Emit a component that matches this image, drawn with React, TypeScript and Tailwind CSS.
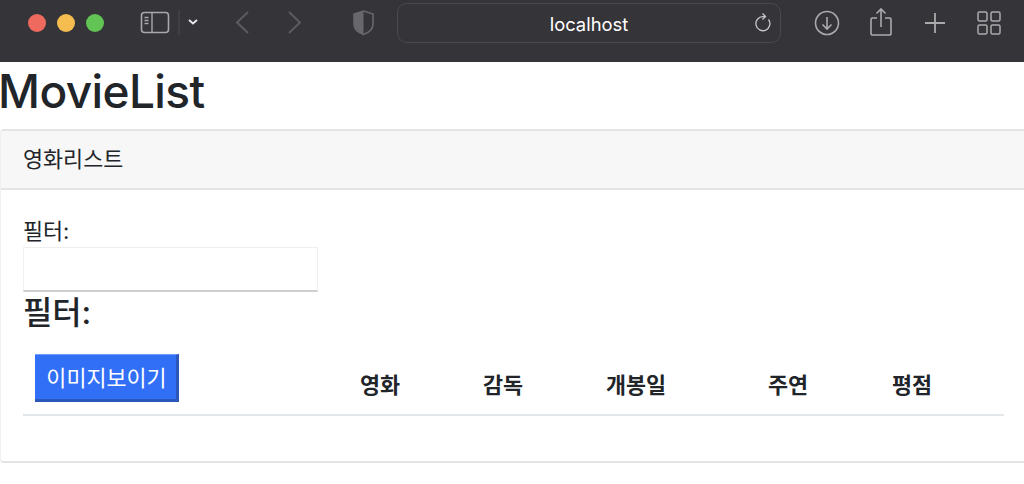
const FONT = "font-['Inter','Noto_Sans_CJK_KR',sans-serif]";

const SafariBar = () => (
  <div className="relative flex h-[62px] shrink-0 bg-[#353439]">
    <span className="absolute left-[28px] top-[14px] h-[18px] w-[18px] rounded-full bg-[#ee6a5f]" />
    <span className="absolute left-[57px] top-[14px] h-[18px] w-[18px] rounded-full bg-[#f5bd4f]" />
    <span className="absolute left-[86px] top-[14px] h-[18px] w-[18px] rounded-full bg-[#61c454]" />
    <svg className="absolute left-[140px] top-[10px]" width="62" height="28" viewBox="0 0 62 28" fill="none">
      <rect x="1.5" y="2.5" width="27" height="20" rx="3" stroke="#a8a8aa" strokeWidth="1.6" />
      <path d="M12 3v19M4.5 7.5h4M4.5 10.5h4M4.5 13.5h4" stroke="#a8a8aa" strokeWidth="1.4" />
      <path d="M39 0v25" stroke="#4d4c51" />
      <path d="M49 10l4 3.5L57 10" stroke="#e6e6e6" strokeWidth="2" />
    </svg>
    <svg className="absolute left-[234px] top-[10px]" width="70" height="26" viewBox="0 0 70 26" fill="none" stroke="#5c5b60" strokeWidth="2">
      <path d="M14 2L3 12.5 14 23" />
      <path d="M55 2l11 10.5L55 23" />
    </svg>
    <svg className="absolute left-[353px] top-[10px]" width="21" height="26" viewBox="0 0 21 26">
      <path d="M10.5 1L20 4v10c0 5-4 8.500-9.500 10.500C5 22.500 1 19 1 14V4z" fill="none" stroke="#68676c" strokeWidth="1.6" />
      <path d="M10.500 1L1 4v10c0 5 4 8.500 9.500 10.500z" fill="#68676c" />
    </svg>
    <div className="absolute left-[397px] top-[3px] flex h-[40px] w-[384px] items-center justify-center rounded-[10px] border border-[#4a494e] pt-[3px] text-[18.4px] text-white">
      localhost
    </div>
    <svg className="absolute left-[754px] top-[13px]" width="18" height="20" viewBox="0 0 18 20" fill="none" stroke="#c9c9ca" strokeWidth="1.3">
      <path d="M14.500 6.500a7 7 0 1 1-5.500-2.800h2" />
      <path d="M8.500 0.500l3 3-3 3" />
    </svg>
    <svg className="absolute left-[814px] top-[10px]" width="26" height="26" viewBox="0 0 26 26" fill="none" stroke="#aaaaac" strokeWidth="1.6">
      <circle cx="13" cy="13" r="11.500" />
      <path d="M13 7v12M8.500 14.500L13 19l4.500-4.500" />
    </svg>
    <svg className="absolute left-[870px] top-[7px]" width="23" height="30" viewBox="0 0 23 30" fill="none" stroke="#aaaaac" strokeWidth="1.6">
      <path d="M7 11H2.500a1.500 1.500 0 0 0-1.500 1.500v14A1.500 1.500 0 0 0 2.500 28h17a1.500 1.500 0 0 0 1.500-1.500v-14a1.500 1.500 0 0 0-1.500-1.500H15" />
      <path d="M11 20V2M6.500 6.500L11 2l4.500 4.500" />
    </svg>
    <svg className="absolute left-[924px] top-[12px]" width="22" height="22" viewBox="0 0 22 22" fill="none" stroke="#aaaaac" strokeWidth="1.8">
      <path d="M11 1v20M1 11h20" />
    </svg>
    <svg className="absolute left-[977px] top-[11px]" width="24" height="24" viewBox="0 0 24 24" fill="none" stroke="#aaaaac" strokeWidth="1.5">
      <rect x="1" y="1" width="9" height="9" rx="1.500" />
      <rect x="14" y="1" width="9" height="9" rx="1.500" />
      <rect x="1" y="14" width="9" height="9" rx="1.500" />
      <rect x="14" y="14" width="9" height="9" rx="1.500" />
    </svg>
  </div>
);

export default function App() {
  return (
    <div className={`${FONT} flex h-[484px] w-[1024px] flex-col overflow-hidden bg-white text-[#212529]`}>
      <SafariBar />
      <h1 className="-ml-[2px] h-[67px] text-[46px] leading-[58px] font-medium tracking-[-0.6px]">MovieList</h1>
      <div className="h-[334px] rounded-l-[4px] border-t-2 border-b-2 border-l border-[#e4e4e4] border-l-[#f0f0f0]">
        <div className="flex h-[59px] items-center border-b-2 border-[#e4e4e4] bg-[#f7f7f7] pl-[22px] text-[21.8px]">
          영화리스트
        </div>
        <div className="pl-[22px] pr-[20px] pt-[27px]">
          <label className="block h-[30px] text-[21.8px] leading-[29px]">필터:</label>
          <input className="block h-[45px] w-[295px] border border-[#efefef] border-b-[2px] border-b-[#cfcfcf] bg-white" />
          <h4 className="h-[42px] text-[31.8px] leading-[42px] font-medium">필터:</h4>
          <div className="flex h-[82px] items-start border-b-2 border-[#e3e6ea]">
            <div className="w-[337px] pl-[12px] pt-[20px]">
              <button className="flex h-[48px] w-[144px] items-center justify-center border-b-[3px] border-r-[3px] border-t border-[#2a57b8] border-t-[#6f9af5] bg-[#316ff6] pt-[2px] pl-[2px] text-[21.8px] text-white">
                이미지보이기
              </button>
            </div>
            <div className="flex pt-[36px] text-[21.8px] leading-[30px] font-bold">
              <span className="w-[123px]">영화</span>
              <span className="w-[123px]">감독</span>
              <span className="w-[162px]">개봉일</span>
              <span className="w-[124px]">주연</span>
              <span>평점</span>
            </div>
          </div>
        </div>
      </div>
    </div>
  );
}
